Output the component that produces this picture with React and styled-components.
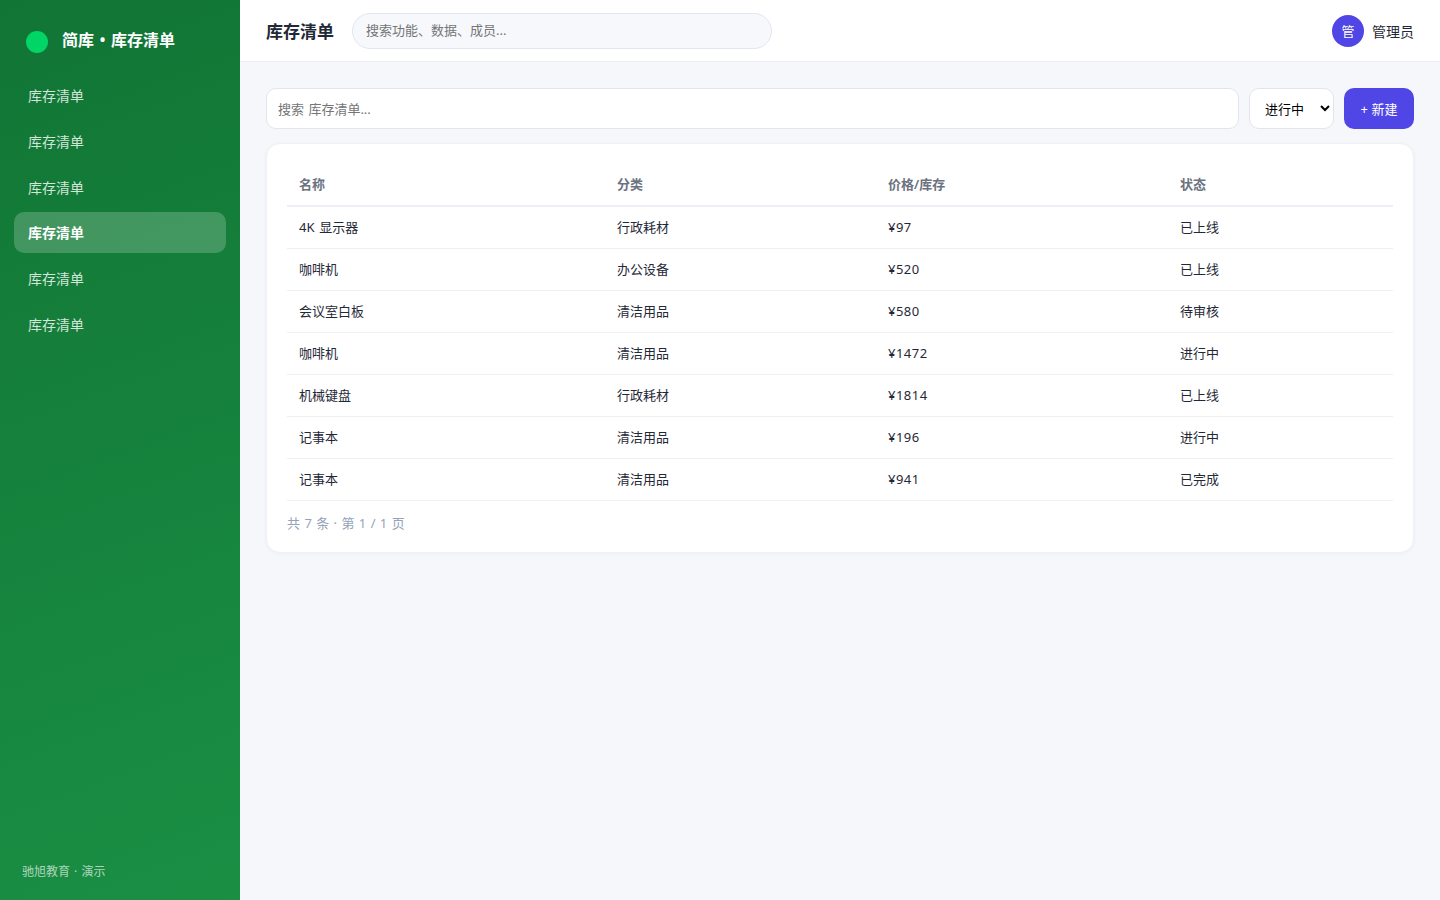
import styled, { createGlobalStyle } from 'styled-components';

const GlobalStyle = createGlobalStyle`
  * {
    box-sizing: border-box;
  }
  body {
    margin: 0;
    background: #f5f7fb;
    color: #1f2937;
    font-family: "Noto Sans", "Noto Sans CJK SC", sans-serif;
    font-size: 14px;
  }
  input, select, button {
    font-family: inherit;
  }
`;

const Layout = styled.div`
  display: grid;
  grid-template-columns: 240px 1fr;
  height: 100vh;
  overflow: hidden;
`;

const Sidebar = styled.aside`
  display: flex;
  flex-direction: column;
  padding: 22px 14px 18px;
  background: linear-gradient(160deg, #117535, #1a8f44);
  color: white;
`;

const Brand = styled.div`
  display: flex;
  align-items: center;
  gap: 14px;
  height: 36px;
  padding: 0 12px;
  margin-bottom: 17px;
  font-size: 16px;
  font-weight: 600;
  white-space: pre;
`;

const BrandDot = styled.span`
  width: 22px;
  height: 22px;
  margin-top: 4px;
  border-radius: 50%;
  background: #00d566;
`;

const BrandName = styled.span`
  padding-bottom: 2px;
`;

const BrandSeparator = styled.span`
  display: inline-block;
  width: 17px;
  text-align: center;
`;

const Nav = styled.nav`
  display: flex;
  flex-direction: column;
  gap: 5px;
`;

const NavItem = styled.a`
  display: flex;
  align-items: center;
  height: 40.67px;
  padding: 0 14px;
  border-radius: 10px;
  font-size: 14px;
  font-weight: ${props => props.$active ? 700 : 400};
  color: ${props => props.$active ? 'white' : 'rgba(255, 255, 255, 0.82)'};
  background: ${props => props.$active ? 'rgba(255, 255, 255, 0.2)' : 'none'};
`;

const SidebarFooter = styled.div`
  margin-top: auto;
  padding: 0 8px;
  font-size: 12px;
  line-height: 20px;
  color: rgba(255, 255, 255, 0.65);
  word-spacing: 1px;
`;

const Main = styled.main`
  display: flex;
  flex-direction: column;
  min-width: 0;
`;

const Topbar = styled.header`
  display: flex;
  align-items: center;
  height: 62px;
  padding: 0 26px;
  background: white;
  border-bottom: 1px solid #eceef3;
`;

const Title = styled.h1`
  margin: 2px 18px 0 0;
  font-size: 17px;
  line-height: 24px;
  font-weight: 700;
`;

const GlobalSearch = styled.input`
  width: 420px;
  height: 36px;
  padding: 0 13px 1px;
  border: 1px solid #e2e6ef;
  border-radius: 18px;
  background: #f6f8fc;
  font-size: 13px;
  &::placeholder {
    color: #757575;
  }
`;

const User = styled.div`
  display: flex;
  align-items: center;
  gap: 8px;
  margin-left: auto;
  font-size: 14px;
`;

const Avatar = styled.span`
  display: grid;
  place-items: center;
  width: 32px;
  height: 32px;
  border-radius: 50%;
  background: #4f46e5;
  color: white;
  font-size: 13px;
`;

const Content = styled.section`
  display: flex;
  flex-direction: column;
  gap: 14px;
  padding: 26px;
`;

const Toolbar = styled.div`
  display: flex;
  gap: 10px;
  height: 41px;
`;

const FilterInput = styled.input`
  flex: 1;
  padding: 0 11px;
  border: 1px solid #e2e5ee;
  border-radius: 10px;
  background: white;
  font-size: 13px;
  word-spacing: 1px;
  &::placeholder {
    color: #757575;
  }
`;

const StatusSelect = styled.select`
  width: 85px;
  padding: 0 0 0 11px;
  border: 1px solid #e2e5ee;
  border-radius: 10px;
  background: white;
  color: black;
  font-size: 13px;
`;

const CreateButton = styled.button`
  width: 70px;
  padding: 0;
  border: none;
  border-radius: 10px;
  background: #4f46e5;
  color: white;
  font-size: 13px;
`;

const Card = styled.div`
  padding: 20px;
  border: 1px solid #eff1f5;
  border-radius: 14px;
  background: white;
  box-shadow: 0 1px 4px rgba(30, 41, 90, 0.04);
`;

const Table = styled.table`
  width: 100%;
  table-layout: fixed;
  border-collapse: separate;
  border-spacing: 0;
  font-size: 13px;
`;

const HeadCell = styled.th`
  width: ${props => props.$width};
  height: 43px;
  padding: 0 12px 1px;
  border-bottom: 2px solid #eeeff4;
  color: #6b7280;
  font-weight: 600;
  line-height: 18px;
  text-align: left;
`;

const Cell = styled.td`
  height: 42px;
  padding: 0 12px 1px;
  border-bottom: 1px solid #eff0f4;
  line-height: 18px;
  letter-spacing: ${props => props.$numeric ? '0.5px' : 'normal'};
  word-spacing: 1.5px;
`;

const Pagination = styled.div`
  margin-top: 12px;
  height: 19px;
  font-size: 13px;
  line-height: 20px;
  color: #94a3b8;
  word-spacing: 1px;
`;

const navItems = ['库存清单', '库存清单', '库存清单', '库存清单', '库存清单', '库存清单'];

const columns = [
  { label: '名称', width: '318px' },
  { label: '分类', width: '271px' },
  { label: '价格/库存', width: '292px' },
  { label: '状态', width: 'auto' },
];

const rows = [
  ['4K 显示器', '行政耗材', '¥97', '已上线'],
  ['咖啡机', '办公设备', '¥520', '已上线'],
  ['会议室白板', '清洁用品', '¥580', '待审核'],
  ['咖啡机', '清洁用品', '¥1472', '进行中'],
  ['机械键盘', '行政耗材', '¥1814', '已上线'],
  ['记事本', '清洁用品', '¥196', '进行中'],
  ['记事本', '清洁用品', '¥941', '已完成'],
];

function App() {
  return (
    <>
      <GlobalStyle />
      <Layout>
        <Sidebar>
          <Brand>
            <BrandDot />
            <BrandName>简库<BrandSeparator>•</BrandSeparator>库存清单</BrandName>
          </Brand>
          <Nav>
            {navItems.map((item, i) => (
              <NavItem key={i} $active={i === 3}>{item}</NavItem>
            ))}
          </Nav>
          <SidebarFooter>驰旭教育 · 演示</SidebarFooter>
        </Sidebar>
        <Main>
          <Topbar>
            <Title>库存清单</Title>
            <GlobalSearch placeholder="搜索功能、数据、成员..." />
            <User>
              <Avatar>管</Avatar>
              管理员
            </User>
          </Topbar>
          <Content>
            <Toolbar>
              <FilterInput placeholder="搜索 库存清单..." />
              <StatusSelect defaultValue="进行中">
                <option>进行中</option>
              </StatusSelect>
              <CreateButton type="button">+ 新建</CreateButton>
            </Toolbar>
            <Card>
              <Table>
                <thead>
                  <tr>
                    {columns.map(col => (
                      <HeadCell key={col.label} $width={col.width}>{col.label}</HeadCell>
                    ))}
                  </tr>
                </thead>
                <tbody>
                  {rows.map((row, i) => (
                    <tr key={i}>
                      {row.map((value, j) => (
                        <Cell key={j} $numeric={j === 2}>{value}</Cell>
                      ))}
                    </tr>
                  ))}
                </tbody>
              </Table>
              <Pagination>共 7 条 · 第 1 / 1 页</Pagination>
            </Card>
          </Content>
        </Main>
      </Layout>
    </>
  );
}

export default App;
